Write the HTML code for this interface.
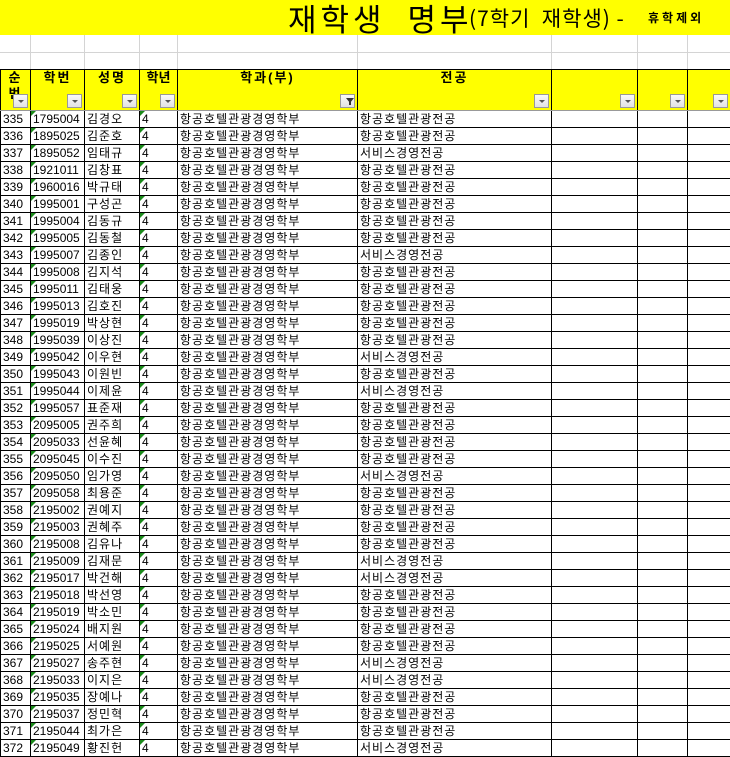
<!DOCTYPE html>
<html><head><meta charset="utf-8">
<style>
body{margin:0;width:730px;height:755px;overflow:hidden;background:#fff;font-family:"Liberation Sans","Noto Sans CJK KR",sans-serif;position:relative;}
.title{position:absolute;left:0;top:0;width:730px;height:35px;background:#ffff00;overflow:hidden;}
.t1{position:absolute;left:288px;top:-5px;font-size:31px;letter-spacing:4px;font-family:"Noto Sans CJK KR",sans-serif;color:#000;white-space:pre;font-weight:normal;}
.t2{position:absolute;left:469px;top:3px;font-size:21px;letter-spacing:1px;font-family:"Noto Sans CJK KR",sans-serif;white-space:pre;}
.t3{position:absolute;left:648px;top:9px;font-size:12px;letter-spacing:3px;font-weight:bold;font-family:"Noto Sans CJK KR",sans-serif;}
.gl{position:absolute;background:#d4d4d4;}
table{position:absolute;left:0;top:69px;border-collapse:collapse;table-layout:fixed;width:730px;}
td{border:1px solid #000;height:16px;padding:0 0 0 2px;font-size:12px;line-height:16px;white-space:nowrap;overflow:hidden;position:relative;font-family:"Liberation Sans","Noto Sans CJK KR",sans-serif;}
tr.h td{height:40px;background:#ffff00;vertical-align:top;text-align:center;font-weight:bold;font-size:13px;line-height:16px;padding:0;border-bottom:1px solid #999;letter-spacing:2px;}
.k{font-family:"Noto Sans CJK KR",sans-serif;letter-spacing:1px;}
.tri{position:absolute;left:0;top:0;width:0;height:0;border-top:5px solid #1a8a1a;border-right:5px solid transparent;}
.dd{position:absolute;right:2px;bottom:2px;width:15px;height:14px;background:linear-gradient(#fafafa,#e2e2e2);border:1px solid #999;box-sizing:border-box;}
.dd:after{content:"";position:absolute;left:4px;top:5px;border-left:3px solid transparent;border-right:3px solid transparent;border-top:3px solid #555;}
.df:after{display:none}
.df b{position:absolute;left:5px;top:3px;width:0;height:0;border-left:4px solid transparent;border-right:4px solid transparent;border-top:5px solid #333;}
.df i{position:absolute;left:8px;top:6px;width:2px;height:4px;background:#333;}
</style></head><body>
<div class="title"><span class="t1">재학생  명부</span><span class="t2">(7학기  재학생) -</span><span class="t3">휴학제외</span></div>
<div class="gl" style="left:0;top:52px;width:730px;height:1px"></div>
<div class="gl" style="left:30px;top:35px;width:1px;height:34px"></div>
<div class="gl" style="left:84px;top:35px;width:1px;height:34px"></div>
<div class="gl" style="left:139px;top:35px;width:1px;height:34px"></div>
<div class="gl" style="left:177px;top:35px;width:1px;height:34px"></div>
<div class="gl" style="left:357px;top:35px;width:1px;height:34px"></div>
<div class="gl" style="left:551px;top:35px;width:1px;height:34px"></div>
<div class="gl" style="left:637px;top:35px;width:1px;height:34px"></div>
<div class="gl" style="left:687px;top:35px;width:1px;height:34px"></div>
<table>
<colgroup><col style="width:30px"><col style="width:54px"><col style="width:55px"><col style="width:38px"><col style="width:180px"><col style="width:194px"><col style="width:86px"><col style="width:50px"><col style="width:43px"></colgroup>
<tr class="h"><td>순<br>번<span class="dd"></span></td><td>학번<span class="dd"></span></td><td>성명<span class="dd"></span></td><td style="letter-spacing:0">학년<span class="dd"></span></td><td>학과(부)<span class="dd df"><b></b><i></i></span></td><td>전공<span class="dd"></span></td><td><span class="dd"></span></td><td><span class="dd"></span></td><td><span class="dd"></span></td></tr>
<tr><td>335</td><td><span class="tri"></span>1795004</td><td class="k">김경오</td><td><span class="tri"></span>4</td><td class="k">항공호텔관광경영학부</td><td class="k">항공호텔관광전공</td><td></td><td></td><td></td></tr>
<tr><td>336</td><td><span class="tri"></span>1895025</td><td class="k">김준호</td><td><span class="tri"></span>4</td><td class="k">항공호텔관광경영학부</td><td class="k">항공호텔관광전공</td><td></td><td></td><td></td></tr>
<tr><td>337</td><td><span class="tri"></span>1895052</td><td class="k">임태규</td><td><span class="tri"></span>4</td><td class="k">항공호텔관광경영학부</td><td class="k">서비스경영전공</td><td></td><td></td><td></td></tr>
<tr><td>338</td><td><span class="tri"></span>1921011</td><td class="k">김창표</td><td><span class="tri"></span>4</td><td class="k">항공호텔관광경영학부</td><td class="k">항공호텔관광전공</td><td></td><td></td><td></td></tr>
<tr><td>339</td><td><span class="tri"></span>1960016</td><td class="k">박규태</td><td><span class="tri"></span>4</td><td class="k">항공호텔관광경영학부</td><td class="k">항공호텔관광전공</td><td></td><td></td><td></td></tr>
<tr><td>340</td><td><span class="tri"></span>1995001</td><td class="k">구성곤</td><td><span class="tri"></span>4</td><td class="k">항공호텔관광경영학부</td><td class="k">항공호텔관광전공</td><td></td><td></td><td></td></tr>
<tr><td>341</td><td><span class="tri"></span>1995004</td><td class="k">김동규</td><td><span class="tri"></span>4</td><td class="k">항공호텔관광경영학부</td><td class="k">항공호텔관광전공</td><td></td><td></td><td></td></tr>
<tr><td>342</td><td><span class="tri"></span>1995005</td><td class="k">김동철</td><td><span class="tri"></span>4</td><td class="k">항공호텔관광경영학부</td><td class="k">항공호텔관광전공</td><td></td><td></td><td></td></tr>
<tr><td>343</td><td><span class="tri"></span>1995007</td><td class="k">김종인</td><td><span class="tri"></span>4</td><td class="k">항공호텔관광경영학부</td><td class="k">서비스경영전공</td><td></td><td></td><td></td></tr>
<tr><td>344</td><td><span class="tri"></span>1995008</td><td class="k">김지석</td><td><span class="tri"></span>4</td><td class="k">항공호텔관광경영학부</td><td class="k">항공호텔관광전공</td><td></td><td></td><td></td></tr>
<tr><td>345</td><td><span class="tri"></span>1995011</td><td class="k">김태웅</td><td><span class="tri"></span>4</td><td class="k">항공호텔관광경영학부</td><td class="k">항공호텔관광전공</td><td></td><td></td><td></td></tr>
<tr><td>346</td><td><span class="tri"></span>1995013</td><td class="k">김호진</td><td><span class="tri"></span>4</td><td class="k">항공호텔관광경영학부</td><td class="k">항공호텔관광전공</td><td></td><td></td><td></td></tr>
<tr><td>347</td><td><span class="tri"></span>1995019</td><td class="k">박상현</td><td><span class="tri"></span>4</td><td class="k">항공호텔관광경영학부</td><td class="k">항공호텔관광전공</td><td></td><td></td><td></td></tr>
<tr><td>348</td><td><span class="tri"></span>1995039</td><td class="k">이상진</td><td><span class="tri"></span>4</td><td class="k">항공호텔관광경영학부</td><td class="k">항공호텔관광전공</td><td></td><td></td><td></td></tr>
<tr><td>349</td><td><span class="tri"></span>1995042</td><td class="k">이우현</td><td><span class="tri"></span>4</td><td class="k">항공호텔관광경영학부</td><td class="k">서비스경영전공</td><td></td><td></td><td></td></tr>
<tr><td>350</td><td><span class="tri"></span>1995043</td><td class="k">이원빈</td><td><span class="tri"></span>4</td><td class="k">항공호텔관광경영학부</td><td class="k">항공호텔관광전공</td><td></td><td></td><td></td></tr>
<tr><td>351</td><td><span class="tri"></span>1995044</td><td class="k">이제윤</td><td><span class="tri"></span>4</td><td class="k">항공호텔관광경영학부</td><td class="k">서비스경영전공</td><td></td><td></td><td></td></tr>
<tr><td>352</td><td><span class="tri"></span>1995057</td><td class="k">표준재</td><td><span class="tri"></span>4</td><td class="k">항공호텔관광경영학부</td><td class="k">항공호텔관광전공</td><td></td><td></td><td></td></tr>
<tr><td>353</td><td><span class="tri"></span>2095005</td><td class="k">권주희</td><td><span class="tri"></span>4</td><td class="k">항공호텔관광경영학부</td><td class="k">항공호텔관광전공</td><td></td><td></td><td></td></tr>
<tr><td>354</td><td><span class="tri"></span>2095033</td><td class="k">선윤혜</td><td><span class="tri"></span>4</td><td class="k">항공호텔관광경영학부</td><td class="k">항공호텔관광전공</td><td></td><td></td><td></td></tr>
<tr><td>355</td><td><span class="tri"></span>2095045</td><td class="k">이수진</td><td><span class="tri"></span>4</td><td class="k">항공호텔관광경영학부</td><td class="k">항공호텔관광전공</td><td></td><td></td><td></td></tr>
<tr><td>356</td><td><span class="tri"></span>2095050</td><td class="k">임가영</td><td><span class="tri"></span>4</td><td class="k">항공호텔관광경영학부</td><td class="k">서비스경영전공</td><td></td><td></td><td></td></tr>
<tr><td>357</td><td><span class="tri"></span>2095058</td><td class="k">최용준</td><td><span class="tri"></span>4</td><td class="k">항공호텔관광경영학부</td><td class="k">항공호텔관광전공</td><td></td><td></td><td></td></tr>
<tr><td>358</td><td><span class="tri"></span>2195002</td><td class="k">권예지</td><td><span class="tri"></span>4</td><td class="k">항공호텔관광경영학부</td><td class="k">항공호텔관광전공</td><td></td><td></td><td></td></tr>
<tr><td>359</td><td><span class="tri"></span>2195003</td><td class="k">권혜주</td><td><span class="tri"></span>4</td><td class="k">항공호텔관광경영학부</td><td class="k">항공호텔관광전공</td><td></td><td></td><td></td></tr>
<tr><td>360</td><td><span class="tri"></span>2195008</td><td class="k">김유나</td><td><span class="tri"></span>4</td><td class="k">항공호텔관광경영학부</td><td class="k">항공호텔관광전공</td><td></td><td></td><td></td></tr>
<tr><td>361</td><td><span class="tri"></span>2195009</td><td class="k">김재문</td><td><span class="tri"></span>4</td><td class="k">항공호텔관광경영학부</td><td class="k">서비스경영전공</td><td></td><td></td><td></td></tr>
<tr><td>362</td><td><span class="tri"></span>2195017</td><td class="k">박건해</td><td><span class="tri"></span>4</td><td class="k">항공호텔관광경영학부</td><td class="k">서비스경영전공</td><td></td><td></td><td></td></tr>
<tr><td>363</td><td><span class="tri"></span>2195018</td><td class="k">박선영</td><td><span class="tri"></span>4</td><td class="k">항공호텔관광경영학부</td><td class="k">항공호텔관광전공</td><td></td><td></td><td></td></tr>
<tr><td>364</td><td><span class="tri"></span>2195019</td><td class="k">박소민</td><td><span class="tri"></span>4</td><td class="k">항공호텔관광경영학부</td><td class="k">항공호텔관광전공</td><td></td><td></td><td></td></tr>
<tr><td>365</td><td><span class="tri"></span>2195024</td><td class="k">배지원</td><td><span class="tri"></span>4</td><td class="k">항공호텔관광경영학부</td><td class="k">항공호텔관광전공</td><td></td><td></td><td></td></tr>
<tr><td>366</td><td><span class="tri"></span>2195025</td><td class="k">서예원</td><td><span class="tri"></span>4</td><td class="k">항공호텔관광경영학부</td><td class="k">항공호텔관광전공</td><td></td><td></td><td></td></tr>
<tr><td>367</td><td><span class="tri"></span>2195027</td><td class="k">송주현</td><td><span class="tri"></span>4</td><td class="k">항공호텔관광경영학부</td><td class="k">서비스경영전공</td><td></td><td></td><td></td></tr>
<tr><td>368</td><td><span class="tri"></span>2195033</td><td class="k">이지은</td><td><span class="tri"></span>4</td><td class="k">항공호텔관광경영학부</td><td class="k">서비스경영전공</td><td></td><td></td><td></td></tr>
<tr><td>369</td><td><span class="tri"></span>2195035</td><td class="k">장예나</td><td><span class="tri"></span>4</td><td class="k">항공호텔관광경영학부</td><td class="k">항공호텔관광전공</td><td></td><td></td><td></td></tr>
<tr><td>370</td><td><span class="tri"></span>2195037</td><td class="k">정민혁</td><td><span class="tri"></span>4</td><td class="k">항공호텔관광경영학부</td><td class="k">항공호텔관광전공</td><td></td><td></td><td></td></tr>
<tr><td>371</td><td><span class="tri"></span>2195044</td><td class="k">최가은</td><td><span class="tri"></span>4</td><td class="k">항공호텔관광경영학부</td><td class="k">항공호텔관광전공</td><td></td><td></td><td></td></tr>
<tr><td>372</td><td><span class="tri"></span>2195049</td><td class="k">황진헌</td><td><span class="tri"></span>4</td><td class="k">항공호텔관광경영학부</td><td class="k">서비스경영전공</td><td></td><td></td><td></td></tr>
</table>
</body></html>
